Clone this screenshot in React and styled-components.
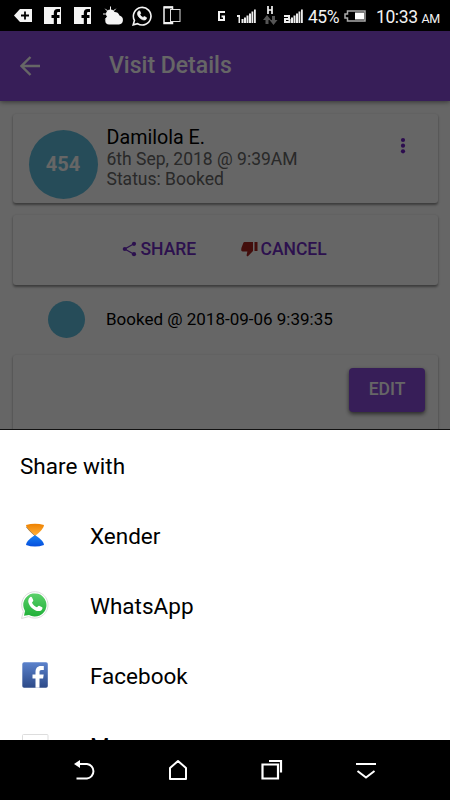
import React from 'react';
import styled, { createGlobalStyle } from 'styled-components';

const GlobalStyle = createGlobalStyle`
  body {
    margin: 0;
    background: #000;
    font-family: Roboto, sans-serif;
  }
`;

const Phone = styled.div`
  display: flex;
  flex-direction: column;
  width: 450px;
  height: 800px;
  overflow: hidden;
  background: #000;
`;

const StatusBar = styled.div`
  display: flex;
  flex: none;
  align-items: center;
  justify-content: space-between;
  height: 31px;
  box-sizing: border-box;
  padding: 0 10px 0 14px;
  color: #f2f2f2;
`;

const StatusGroup = styled.div`
  display: flex;
  align-items: center;
  height: 31px;
`;

const Glyph = styled.svg`
  display: block;
  flex: none;
  margin-left: ${props => props.$gap || 0}px;
`;

const Percent = styled.span`
  margin-left: 5px;
  width: 32px;
  font-size: 17.5px;
  line-height: 31px;
  letter-spacing: -0.5px;
  white-space: nowrap;
  padding-top: 4px;
`;

const Clock = styled.span`
  margin-left: 10px;
  width: 64px;
  font-size: 17.5px;
  line-height: 31px;
  letter-spacing: -0.4px;
  white-space: nowrap;
  padding-top: 4px;
`;

const Meridiem = styled.small`
  margin-left: 4px;
  font-size: 12.5px;
`;

const Page = styled.div`
  position: relative;
  flex: none;
  height: 399px;
  overflow: hidden;
  background: #fff;
`;

const Scrim = styled.div`
  position: absolute;
  inset: 0;
  background: rgba(0, 0, 0, 0.6);
  border-bottom: 1px solid #111;
  box-sizing: border-box;
`;

const Header = styled.div`
  display: flex;
  align-items: center;
  height: 70px;
  box-sizing: border-box;
  padding-left: 20px;
  background: #8a4bdb;
  box-shadow: 0 1px 5px rgba(0, 0, 0, 0.5);
`;

const Title = styled.h1`
  margin: -1px 0 0 69px;
  color: #fff;
  font-size: 23px;
  font-weight: 500;
  line-height: 28px;
`;

const Card = styled.div`
  display: flex;
  height: ${props => props.$height}px;
  box-sizing: border-box;
  margin: ${props => props.$top}px 12.5px 0;
  border-radius: 3px;
  background: #fff;
  box-shadow: 0 1.5px 2.5px rgba(0, 0, 0, 0.42);
`;

const VisitCard = styled(Card)`
  padding: 16px 28.5px 0 16px;
`;

const Avatar = styled.div`
  flex: none;
  width: 69px;
  height: 69px;
  border-radius: 50%;
  background: #5fbede;
  color: #fff;
  font-size: 20px;
  font-weight: 700;
  line-height: 69px;
  text-align: center;
`;

const VisitInfo = styled.div`
  flex: 1;
  margin: -2.5px 0 0 9px;
  color: #666;
  font-size: 17.5px;
  line-height: 20px;
`;

const Patient = styled.div`
  color: #000;
  font-size: 19.7px;
  line-height: 22px;
`;

const Actions = styled(Card)`
  align-items: center;
  padding-left: 109px;
`;

const Action = styled.div`
  display: flex;
  align-items: center;
  gap: 3px;
  width: 119px;
  margin-top: -3px;
  color: #6f2cc4;
  font-size: 17.5px;
  font-weight: 500;
`;

const Event = styled.div`
  display: flex;
  align-items: center;
  height: 69px;
  padding: 0 0 1px 47.5px;
  color: #000;
  font-size: 17px;
`;

const EventText = styled.span`
  padding-bottom: 2px;
`;

const EventDot = styled.div`
  width: 37.5px;
  height: 37.5px;
  margin-right: 21px;
  border-radius: 50%;
  background: #5fbede;
`;

const EditCard = styled(Card)`
  justify-content: flex-end;
  padding: 13px 12.5px 0 0;
`;

const EditButton = styled.button`
  width: 76px;
  height: 44px;
  padding: 0 0 2px;
  border: 0;
  border-radius: 4px;
  background: #8a4bdb;
  box-shadow: 0 2px 4px rgba(0, 0, 0, 0.6);
  color: #fff;
  font-family: Roboto, sans-serif;
  font-size: 17.5px;
  font-weight: 500;
`;

const Sheet = styled.div`
  flex: none;
  height: 310px;
  overflow: hidden;
  background: #fff;
  color: #000;
`;

const SheetTitle = styled.div`
  height: 70px;
  padding-left: 20px;
  font-size: 22.5px;
  line-height: 72px;
`;

const ShareRow = styled.div`
  display: flex;
  align-items: center;
  height: 70px;
  padding-left: 20px;
  font-size: 22.5px;
`;

const ShareIcon = styled.div`
  width: 70px;
  height: 30px;
`;

const ShareName = styled.span`
  padding-top: 2px;
`;

const NavBar = styled.div`
  display: flex;
  flex: none;
  align-items: center;
  justify-content: space-between;
  height: 60px;
  box-sizing: border-box;
  padding: 0 72px 0 73px;
`;

const Signal = ({ sim, gap }) => (
  <Glyph $gap={gap} width="19" height="14" viewBox="0 0 19 14" fill="#eee">
    {sim === 1
      ? <path d="M0 6h3v8H1.500V8H0z" />
      : <path d="M0 6h6v5H2v1h4v2H0V9h4V8H0z" />}
    <path d="M4.500 10h2v4h-2zM7 8.500h2V14H7zM9.500 6.500h2V14h-2zM12 4.500h2V14h-2zM14.500 2.500h1.800V14h-1.800zM17 .5h1.800V14H17z" />
  </Glyph>
);

const XenderIcon = () => (
  <svg width="30" height="30" viewBox="0 0 30 30">
    <defs>
      <linearGradient id="sand" x1="0" y1="0" x2="0" y2="1">
        <stop offset="0" stopColor="#ee8100" />
        <stop offset="1" stopColor="#ffb23c" />
      </linearGradient>
      <linearGradient id="water" x1="0" y1="0" x2="0" y2="1">
        <stop offset="0" stopColor="#1782f4" />
        <stop offset="1" stopColor="#064fdd" />
      </linearGradient>
    </defs>
    <path d="M6 5Q15 2.500 24 5Q24 9 15 16Q6 9 6 5z" fill="url(#sand)" />
    <path d="M15 15Q6 21 6 25Q15 28 24 25Q24 21 15 15z" fill="url(#water)" />
    <path d="M6 7l9 9" fill="none" stroke="#777" strokeWidth=".6" />
  </svg>
);

const phonePath = 'M10.200 8.500c.5-.8 1.500-.7 1.900.1l1.100 2.500c.3.700-.8 1.500-1.100 2 .9 1.900 2.400 3.200 4.300 4 .6-.4 1.200-1.600 1.900-1.300l2.600 1.300c.7.5.1 2-.6 2.600-1.600 1.200-3.700.8-5.500-.1-2.900-1.400-4.700-3.500-5.700-6.200-.6-1.900-.1-3.800 1.100-4.900z';

const WhatsAppIcon = () => (
  <svg width="30" height="30" viewBox="0 0 30 30">
    <defs>
      <linearGradient id="green" x1="0" y1="0" x2="0" y2="1">
        <stop offset="0" stopColor="#5bd06a" />
        <stop offset="1" stopColor="#20b038" />
      </linearGradient>
    </defs>
    <path d="M1.500 28.500l1.900-7A13.200 13.200 0 1 1 8.700 26.600z" fill="#fff" stroke="#ddd" strokeWidth="1" />
    <path d="M4 25.800l1-4.700A11.600 11.600 0 1 1 9 25z" fill="url(#green)" />
    <path d={phonePath} transform="translate(-1.900 -2.400) scale(1.150)" fill="#fff" />
  </svg>
);

const FacebookIcon = () => (
  <svg width="30" height="30" viewBox="0 0 30 30">
    <defs>
      <linearGradient id="navy" x1="0" y1="0" x2="0" y2="1">
        <stop offset="0" stopColor="#5b82cc" />
        <stop offset="1" stopColor="#2d4a88" />
      </linearGradient>
    </defs>
    <rect x="2.300" y="2.300" width="25.500" height="25.500" rx="1.800" fill="url(#navy)" />
    <path d="M15.500 27.800V18.500h-3v-4h3v-2.300c0-4 2-6.200 5.300-6.200h3v4h-2.200c-1.700 0-2.100.8-2.100 2.200v2.300h4.200l-.6 4h-3.600v9.300z" fill="#fff" />
  </svg>
);

const MailIcon = () => (
  <svg width="30" height="30" viewBox="0 0 30 30">
    <rect x="2.500" y="4.500" width="25.500" height="25" rx="1" fill="#fff" stroke="#ddd" />
  </svg>
);

const targets = [
  { name: 'Xender', icon: <XenderIcon /> },
  { name: 'WhatsApp', icon: <WhatsAppIcon /> },
  { name: 'Facebook', icon: <FacebookIcon /> },
  { name: 'Messages', icon: <MailIcon /> },
];

const FacebookBadge = ({ gap }) => (
  <Glyph $gap={gap} width="17" height="17" viewBox="0 0 17 17">
    <path d="M0 0h17v17h-4v-6h2.500V8H13V6.500c0-1 .3-1.500 1.300-1.500H16V2h-2.500C11 2 9.800 3.500 9.800 6v2H7.500v3h2.300v6H0z" fill="#f4f4f4" />
  </Glyph>
);

export default class App extends React.Component {
  render() {
    return (
      <Phone>
        <GlobalStyle />
        <StatusBar>
          <StatusGroup>
            <Glyph width="18" height="13" viewBox="0 0 18 13">
              <path d="M0 6.500L6 0h12v13H6z" fill="#f4f4f4" />
              <path d="M7 6.500h8M11 2.500v8" stroke="#000" strokeWidth="1.800" />
            </Glyph>
            <FacebookBadge gap={12} />
            <FacebookBadge gap={13} />
            <Glyph $gap={11} width="22" height="19" viewBox="0 0 22 19" fill="#f4f4f4">
              <circle cx="8.500" cy="8" r="4.500" />
              <path d="M8.500 .5v15M1 8h15M3.300 2.800l10.400 10.400M13.700 2.800L3.300 13.200" stroke="#f4f4f4" strokeWidth="1" />
              <path d="M7.500 18.500a4 4 0 0 1-.5-8A5.500 5.500 0 0 1 17.500 9.500 4.600 4.600 0 0 1 17 18.500z" />
            </Glyph>
            <Glyph $gap={7} width="22" height="22" viewBox="0 0 30 30">
              <path d="M3 27l1.700-6A12 12 0 1 1 9 25.500z" fill="none" stroke="#f4f4f4" strokeWidth="2.200" />
              <path d={phonePath} fill="#f4f4f4" stroke="#f4f4f4" />
            </Glyph>
            <Glyph $gap={10} width="18" height="19" viewBox="0 0 18 19">
              <path d="M9.500 3V1H1v16.500h8.500V16" fill="none" stroke="#f4f4f4" strokeWidth="1.500" />
              <path d="M1 1.500h9M1 17h9" stroke="#f4f4f4" strokeWidth="2" />
              <rect x="7.500" y="3.500" width="9.500" height="12" fill="#000" stroke="#ddd" />
            </Glyph>
          </StatusGroup>
          <StatusGroup>
            <Glyph width="7" height="10" viewBox="0 0 7 10">
              <path d="M7 1H1v8h5V5.500H3.500" fill="none" stroke="#f4f4f4" strokeWidth="2" />
            </Glyph>
            <Signal sim={1} gap={12} />
            <Glyph $gap={7} width="15" height="19" viewBox="0 0 15 19">
              <path d="M5 0v8M9 0v8M5 4h4" stroke="#f4f4f4" strokeWidth="1.700" />
              <path d="M4 9l4 5H5.500v4h-3v-4H0zM10.500 19l-4-5H9v-4h3v4h2.500z" fill="#555" />
            </Glyph>
            <Signal sim={2} gap={6} />
            <Percent>45%</Percent>
            <Glyph $gap={4} width="22" height="12" viewBox="0 0 22 12">
              <path d="M3.500 1H21v10H3.500V8H1V4h2.500z" fill="none" stroke="#aaa" strokeWidth="1.500" />
              <path d="M11 2.500h9v7h-9z" fill="#fff" />
            </Glyph>
            <Clock>10:33<Meridiem>AM</Meridiem></Clock>
          </StatusGroup>
        </StatusBar>

        <Page>
          <Header>
            <svg width="20" height="20" viewBox="0 0 20 20">
              <path d="M20 10H2M10.500 1L1.500 10l9 9" fill="none" stroke="#fff" strokeWidth="2.400" />
            </svg>
            <Title>Visit Details</Title>
          </Header>
          <VisitCard $height={89} $top={12.5}>
            <Avatar>454</Avatar>
            <VisitInfo>
              <Patient>Damilola E.</Patient>
              <div>6th Sep, 2018 @ 9:39AM</div>
              <div>Status: Booked</div>
            </VisitInfo>
            <Glyph width="12" height="32" viewBox="0 0 12 32" fill="#6f1fc4">
              <circle cx="6" cy="10" r="2.100" />
              <circle cx="6" cy="15.700" r="2.100" />
              <circle cx="6" cy="21.300" r="2.100" />
            </Glyph>
          </VisitCard>
          <Actions $height={70} $top={12.5}>
            <Action>
              <svg width="16" height="16" viewBox="0 0 16 16" fill="#6f2cc4">
                <path d="M12 2.800L2.800 8l9.200 5.200" fill="none" stroke="#6f2cc4" strokeWidth="1.300" />
                <circle cx="12" cy="2.800" r="2.100" />
                <circle cx="2.800" cy="8" r="2.100" />
                <circle cx="12" cy="13.200" r="2.100" />
              </svg>
              SHARE
            </Action>
            <Action>
              <svg width="17" height="16" viewBox="0 0 17 16" fill="#a82420">
                <path d="M3.500 1H12v9L6.700 15.500 5.500 14.500l.9-4.100H1.600C.8 10.400.2 9.700.2 9L.4 7 2.300 2C2.500 1.300 2.900 1 3.500 1zM13.500 1h3v9h-3z" />
              </svg>
              CANCEL
            </Action>
          </Actions>
          <Event>
            <EventDot />
            <EventText>Booked @ 2018-09-06 9:39:35</EventText>
          </Event>
          <EditCard $height={120} $top={0}>
            <EditButton>EDIT</EditButton>
          </EditCard>
          <Scrim />
        </Page>

        <Sheet>
          <SheetTitle>Share with</SheetTitle>
          {targets.map(target => (
            <ShareRow key={target.name}>
              <ShareIcon>{target.icon}</ShareIcon>
              <ShareName>{target.name}</ShareName>
            </ShareRow>
          ))}
        </Sheet>

        <NavBar>
          <Glyph width="24" height="22" viewBox="0 0 24 22">
            <path d="M5 5h9a7.300 7.300 0 0 1 0 14.500H3.500" fill="none" stroke="#fff" strokeWidth="2" />
            <path d="M1 5l6-4v8z" fill="#fff" />
          </Glyph>
          <Glyph width="20" height="22" viewBox="0 0 20 22">
            <path d="M2 20V9l8-7 8 7v11z" fill="none" stroke="#fff" strokeWidth="2" strokeLinejoin="round" />
          </Glyph>
          <Glyph width="24" height="22" viewBox="0 0 24 22">
            <path d="M3.500 5.500H19v14H3.500zM10 2h12v11.500" fill="none" stroke="#fff" strokeWidth="2.200" />
          </Glyph>
          <Glyph width="24" height="22" viewBox="0 0 24 22">
            <path d="M2 5h20M3.500 12l8.500 6.500L20.500 12" fill="none" stroke="#fff" strokeWidth="2" />
          </Glyph>
        </NavBar>
      </Phone>
    );
  }
}
